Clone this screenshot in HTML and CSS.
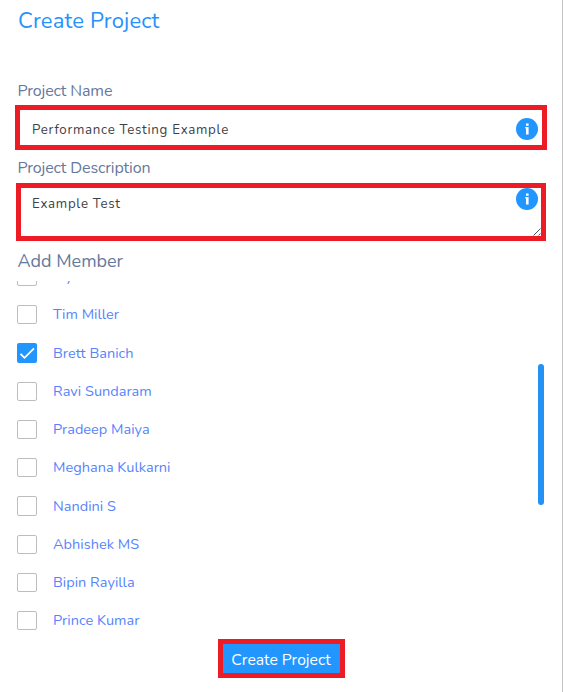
FILE: index.html
```html
<!DOCTYPE html>
<html lang="en">
<head>
<meta charset="utf-8">
<title>Create Project</title>
<link rel="stylesheet" href="styles.css">
</head>
<body>
<form class="panel">
  <h1 class="title">Create Project</h1>
  <label class="label" for="name">Project Name</label>
  <div class="field field-name">
    <input id="name" class="control" type="text" value="Performance Testing Example">
    <svg class="info" viewBox="0 0 22 22"><circle cx="11" cy="11" r="11"/><path d="M10 5.5h2.6v2.2H10zM9.3 9h3.3v7.6H10v-6H9.3z"/></svg>
  </div>
  <label class="label label-desc" for="desc">Project Description</label>
  <div class="field field-desc">
    <div id="desc" class="control">Example Test</div>
    <svg class="info" viewBox="0 0 22 22"><circle cx="11" cy="11" r="11"/><path d="M10 5.5h2.6v2.2H10zM9.3 9h3.3v7.6H10v-6H9.3z"/></svg>
    <svg class="grip" viewBox="0 0 8 8"><path d="M0.5 7.5l7-7M5.5 7.5l2-2"/></svg>
  </div>
  <h2 class="subtitle">Add Member</h2>
  <div class="members">
    <ul class="list">
      <li class="row"><span class="box"></span><span class="name">Jay</span></li>
      <li class="row"><span class="box"></span><span class="name">Tim Miller</span></li>
      <li class="row"><span class="box checked"><svg viewBox="0 0 20 20"><path d="M3.5 10.8l4 4L17 5.3"/></svg></span><span class="name">Brett Banich</span></li>
      <li class="row"><span class="box low"></span><span class="name">Ravi Sundaram</span></li>
      <li class="row"><span class="box"></span><span class="name">Pradeep Maiya</span></li>
      <li class="row"><span class="box"></span><span class="name">Meghana Kulkarni</span></li>
      <li class="row"><span class="box tall"></span><span class="name">Nandini S</span></li>
      <li class="row"><span class="box low"></span><span class="name">Abhishek MS</span></li>
      <li class="row"><span class="box"></span><span class="name">Bipin Rayilla</span></li>
      <li class="row"><span class="box"></span><span class="name">Prince Kumar</span></li>
    </ul>
    <div class="thumb"></div>
  </div>
  <button class="submit" type="button">Create Project</button>
</form>
</body>
</html>
```
FILE: styles.css
```css
* { box-sizing: border-box; }
body { margin: 0; background: #fff; font-family: Nunito, Lato, sans-serif; }
.panel {
  display: flex;
  flex-direction: column;
  width: 563px;
  height: 692px;
  padding: 7px 0 0 18px;
  border-right: 1px solid #c4c4c4;
  overflow: hidden;
}
.title { margin: 0; height: 28px; font-size: 22px; line-height: 28px; font-weight: 400; color: #2492fc; letter-spacing: .15px; }
.label { height: 20px; margin: 46px 0 0 -.5px; font-size: 16px; line-height: 20px; color: #66789c; letter-spacing: -.14px; }
.field { display: flex; align-items: flex-start; border: 5px solid #ed1c24; position: relative; }
.field-name { width: 532px; height: 45px; margin: 4px 0 0 -3px; padding: 8px 4px 0 12px; }
.label-desc { margin-top: 8px; }
.field-desc { width: 530px; height: 58px; margin: 5px 0 0 -2px; padding: 0 3px 0 11px; }
.control { flex: 1; min-width: 0; border: 0; padding: 0; outline: 0; background: none; font: 400 13.3px/22px Nunito, Lato, sans-serif; color: #3d4147; letter-spacing: .7px; }
.field-name .control { height: 22px; margin-top: 1px; }
.field-desc .control { padding-top: 5px; }
.info { width: 22px; height: 22px; flex: none; }
.field-name .info { margin-top: .3px; }
.info circle { fill: #2196ff; }
.info path { fill: #fff; }
.grip { position: absolute; right: 0; bottom: 0; width: 8px; height: 8px; }
.grip path { fill: none; stroke: #555; stroke-width: 1; }
.subtitle { margin: 8px 0 0 -.5px; height: 24px; font-size: 18px; line-height: 24px; font-weight: 400; color: #66789c; letter-spacing: 0; }
.members { display: flex; justify-content: space-between; height: 355px; margin: 8px 18px 0 -1px; overflow: hidden; }
.list { list-style: none; margin: -23.9px 0 0; padding: 0; }
.row { display: flex; align-items: center; height: 38.25px; gap: 16px; }
.box { width: 20px; height: 19px; border: 1px solid #bdbdbd; border-radius: 2px; }
.tall { height: 20px; }
.low { margin-top: 1px; }
.checked { height: 20px; border: 0; background: #2196ff; }
.checked svg { display: block; width: 20px; height: 20px; }
.checked path { fill: none; stroke: #fff; stroke-width: 1.8; }
.name { font-size: 14.5px; line-height: 20px; color: #5683fc; letter-spacing: .02px; }
.thumb { width: 6px; height: 141px; margin-top: 83px; border-radius: 3px; background: #2492f5; }
.submit { width: 127px; height: 39px; margin: 3px 0 0 200px; padding: 2px 1px 0 0; border: 5px solid #ed1c24; background: #2196ff; color: #fff; font: 400 15.7px/28px Nunito, Lato, sans-serif; white-space: nowrap; }
```
